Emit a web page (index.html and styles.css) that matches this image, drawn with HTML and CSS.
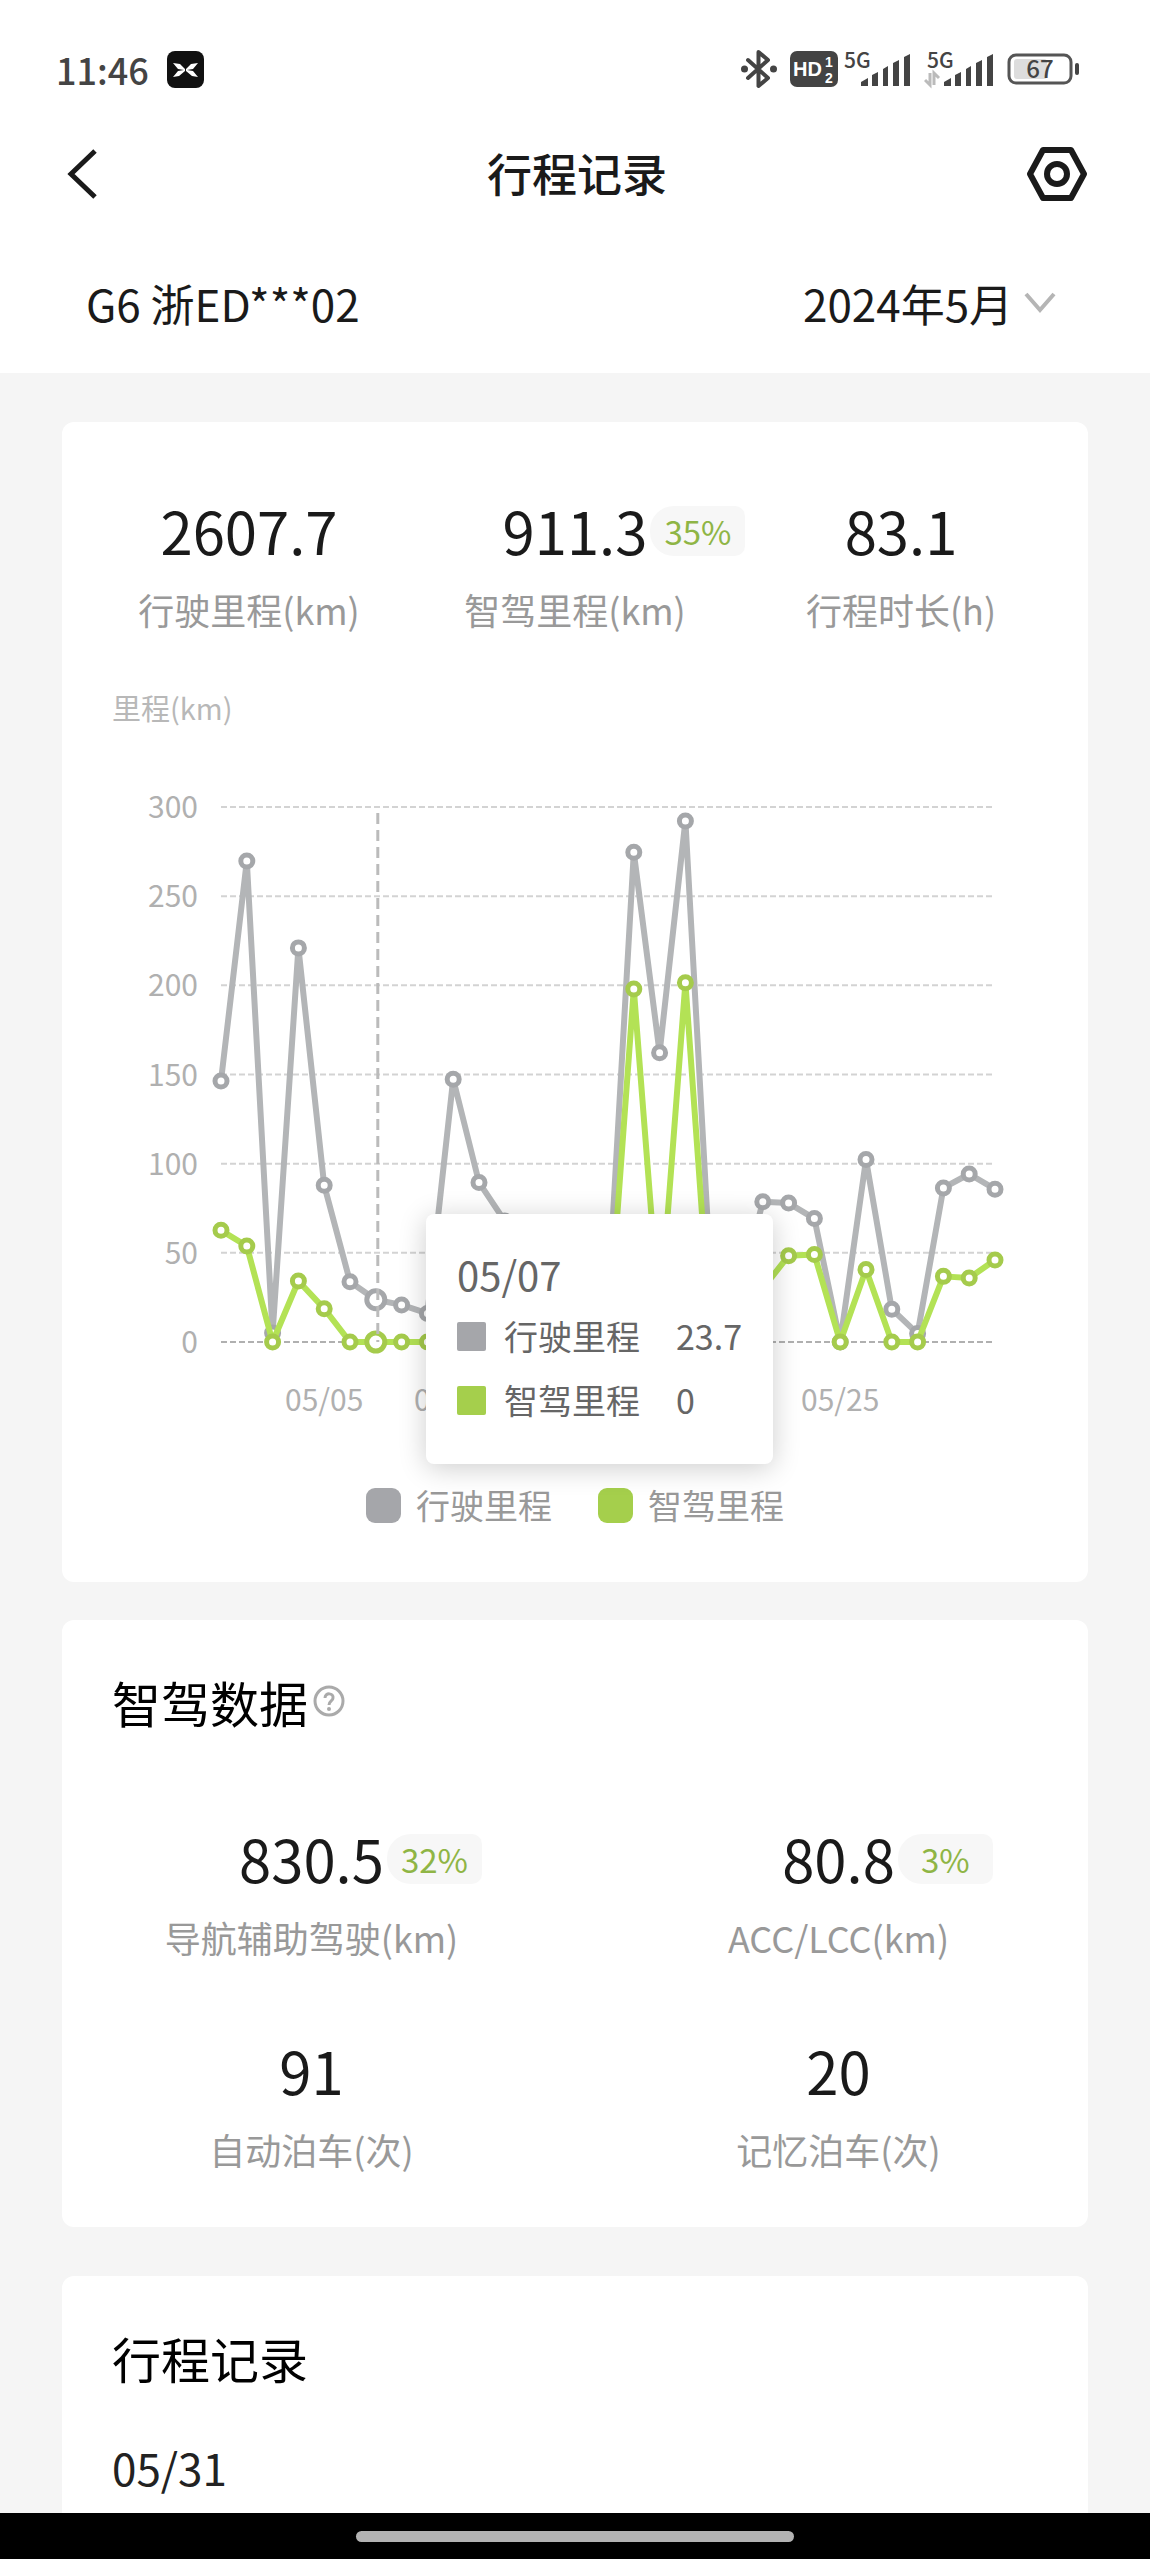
FILE: index.html
```html
<!DOCTYPE html>
<html lang="zh-CN">
<head>
    <meta charset="UTF-8">
    <meta name="viewport" content="width=device-width, initial-scale=1.0">
    <title>行程记录</title>
    <link rel="stylesheet" href="styles.css">
</head>
<body>
    <header class="header">
        <div class="status-bar">
            <span class="time">11:46</span>
            <svg class="app-icon" width="37" height="37" viewBox="0 0 37 37">
                <rect width="37" height="37" rx="8" fill="#111"/>
                <path d="M6 12 L13 13 L18 18 V20 L12 25 L6 26 L11 20 L17 19 L11 18 Z M31 12 L24 13 L19 18 V20 L25 25 L31 26 L26 20 L20 19 L26 18 Z" fill="#fff"/>
            </svg>
            <div class="status-icons">
                <svg width="36" height="40" viewBox="0 0 36 40">
                    <path d="M7 11 L27 29 L17.500 37 V3 L27 11 L7 29" fill="none" stroke="#444" stroke-width="4" stroke-linejoin="round" stroke-linecap="round"/>
                    <circle cx="3.500" cy="20" r="3.500" fill="#444"/>
                    <circle cx="32.500" cy="20" r="3.500" fill="#444"/>
                </svg>
                <svg class="hd" width="48" height="36" viewBox="0 0 48 36">
                    <rect width="48" height="36" rx="7" fill="#444"/>
                    <text class="hd-text" x="3" y="25">HD</text>
                    <text class="hd-num" x="35" y="16">1</text>
                    <text class="hd-num" x="35" y="32">2</text>
                </svg>
                <svg width="67" height="52" viewBox="0 -8 67 52">
                    <text class="net" x="0" y="17">5G</text>
                    <path d="M17 35 v-4 l7 -4 v8z M28 35 v-11 l6 -3 v14z M39 35 v-17 l5 -3 v20z M49 35 v-23 l6 -3 v26z M60 35 v-29 l6 -3 v32z" fill="#444"/>
                </svg>
                <svg width="70" height="52" viewBox="0 -8 70 52">
                    <text class="net" x="3" y="17">5G</text>
                    <path d="M6 22 v12 l-5 -5 M10 34 v-12 l5 5" fill="none" stroke="#bbb" stroke-width="3"/>
                    <path d="M20 35 v-4 l7 -4 v8z M31 35 v-11 l6 -3 v14z M42 35 v-17 l5 -3 v20z M52 35 v-23 l6 -3 v26z M63 35 v-29 l6 -3 v32z" fill="#444"/>
                </svg>
                <svg width="73" height="48" viewBox="0 -8 73 48">
                    <rect x="2" y="2" width="62" height="28" rx="7" fill="#fff" stroke="#555" stroke-width="3"/>
                    <rect x="7" y="6" width="33" height="20" rx="3" fill="#ddd"/>
                    <rect x="68" y="10" width="4" height="12" rx="2" fill="#444"/>
                    <text class="battery" x="33" y="25">67</text>
                </svg>
            </div>
        </div>

        <div class="title-bar">
            <button class="icon-btn" type="button" aria-label="返回">
                <svg width="30" height="50" viewBox="0 0 30 50">
                    <path d="M28 2 L4 25 L28 48" fill="none" stroke="#1a1a1a" stroke-width="5"/>
                </svg>
            </button>
            <h1>行程记录</h1>
            <button class="icon-btn" type="button" aria-label="设置">
                <svg width="60" height="54" viewBox="0 0 60 54">
                    <path d="M16 3 H44 L57 27 L44 51 H16 L3 27 Z" fill="none" stroke="#1a1a1a" stroke-width="6" stroke-linejoin="round"/>
                    <circle cx="30" cy="27" r="10" fill="none" stroke="#1a1a1a" stroke-width="6"/>
                </svg>
            </button>
        </div>

        <div class="filter-bar">
            <span>G6 浙ED***02</span>
            <label class="month">
                <select aria-label="月份">
                    <option>2024年5月</option>
                    <option>2024年4月</option>
                </select>
                <svg width="32" height="22" viewBox="0 0 32 22">
                    <path d="M2 2 L16 18 L30 2" fill="none" stroke="#b5b5b5" stroke-width="4"/>
                </svg>
            </label>
        </div>
    </header>

    <main class="content">
        <section class="card summary">
            <div class="stats three">
                <div class="stat">
                    <div class="value">2607.7</div>
                    <div class="label">行驶里程(km)</div>
                </div>
                <div class="stat">
                    <div class="value">911.3<span class="badge">35%</span></div>
                    <div class="label">智驾里程(km)</div>
                </div>
                <div class="stat">
                    <div class="value">83.1</div>
                    <div class="label">行程时长(h)</div>
                </div>
            </div>
            <div class="unit">里程(km)</div>
            <div class="chart">
                <svg id="chart" viewBox="0 0 1026 650"></svg>
                <div class="tooltip">
                    <div class="tooltip-date">05/07</div>
                    <div class="tooltip-row"><i class="mark gray"></i><span class="name">行驶里程</span><span>23.7</span></div>
                    <div class="tooltip-row"><i class="mark green"></i><span class="name">智驾里程</span><span>0</span></div>
                </div>
            </div>
            <div class="legend">
                <div class="legend-item"><i class="swatch gray"></i>行驶里程</div>
                <div class="legend-item"><i class="swatch green"></i>智驾里程</div>
            </div>
        </section>

        <section class="card driving">
            <h2>智驾数据
                <button class="icon-btn" type="button" aria-label="说明">
                    <svg width="32" height="32" viewBox="0 0 32 32">
                        <circle cx="16" cy="16" r="14" fill="none" stroke="#aaa" stroke-width="3"/>
                        <path d="M12 13 C12 7 21 8 20 13 C20 16 16 16 16 20" fill="none" stroke="#aaa" stroke-width="3"/>
                        <circle cx="16" cy="24" r="2" fill="#aaa"/>
                    </svg>
                </button>
            </h2>
            <div class="stats two">
                <div class="stat">
                    <div class="value">830.5<span class="badge">32%</span></div>
                    <div class="label">导航辅助驾驶(km)</div>
                </div>
                <div class="stat">
                    <div class="value">80.8<span class="badge">3%</span></div>
                    <div class="label">ACC/LCC(km)</div>
                </div>
                <div class="stat">
                    <div class="value">91</div>
                    <div class="label">自动泊车(次)</div>
                </div>
                <div class="stat">
                    <div class="value">20</div>
                    <div class="label">记忆泊车(次)</div>
                </div>
            </div>
        </section>

        <section class="card records">
            <h2>行程记录</h2>
            <div class="date">05/31</div>
        </section>
    </main>

    <footer class="nav-bar"><div class="nav-pill"></div></footer>

    <script src="chart.js"></script>
</body>
</html>
```
FILE: styles.css
```css
* {
    margin: 0;
    padding: 0;
    box-sizing: border-box;
}
body {
    display: flex;
    flex-direction: column;
    min-height: 100vh;
    background-color: #f5f5f5;
    color: #1a1a1a;
    font-family: "Noto Sans CJK SC", "Noto Sans", sans-serif;
}
svg {
    display: block;
}
.icon-btn {
    border: none;
    background: none;
    cursor: pointer;
}

/* header */
.header {
    background: white;
    padding: 44px 0 40px;
}
.status-bar {
    display: flex;
    align-items: center;
    height: 50px;
    padding: 0 70px 0 56px;
}
.time {
    font-size: 36px;
    font-weight: 500;
    line-height: 50px;
    color: #444;
}
.app-icon {
    margin-left: 18px;
}
.status-icons {
    display: flex;
    align-items: center;
    gap: 13px;
    margin-left: auto;
}
.hd {
    margin-right: -7px;
}
.hd-text {
    font-family: "Liberation Sans", sans-serif;
    font-size: 20px;
    font-weight: bold;
    fill: white;
}
.hd-num {
    font-family: "Liberation Sans", sans-serif;
    font-size: 14px;
    font-weight: bold;
    fill: white;
}
.net {
    font-size: 21px;
    font-weight: 500;
    fill: #444;
}
.battery {
    font-size: 24px;
    font-weight: 500;
    fill: #444;
    text-anchor: middle;
}
.title-bar {
    display: flex;
    align-items: center;
    justify-content: space-between;
    height: 100px;
    margin-top: 30px;
    padding: 0 63px 0 67px;
}
.title-bar .icon-btn {
    width: 60px;
}
h1 {
    font-size: 45px;
    font-weight: 500;
    line-height: 60px;
    padding-bottom: 3px;
}
.filter-bar {
    display: flex;
    justify-content: space-between;
    height: 60px;
    margin-top: 49px;
    padding: 0 94px 0 86px;
    font-size: 44px;
    line-height: 60px;
}
.month {
    display: flex;
    align-items: center;
    gap: 10px;
}
.month select {
    appearance: none;
    border: none;
    background: none;
    color: inherit;
    font: inherit;
}

/* cards */
.content {
    flex: 1;
    display: flex;
    flex-direction: column;
    padding: 49px 62px 0;
}
.card {
    background: white;
    border-radius: 12px;
}
.summary {
    padding: 78px 0 57px;
    margin-bottom: 38px;
}
.driving {
    padding: 51px 0 53px;
    margin-bottom: 49px;
}
.records {
    flex: 1;
    padding: 51px 50px 16px;
    border-radius: 12px 12px 0 0;
}
h2 {
    display: flex;
    align-items: center;
    gap: 5px;
    height: 60px;
    font-size: 49px;
    font-weight: 400;
    color: black;
}
.driving h2 {
    padding: 0 50px;
}
.stats {
    display: grid;
    padding: 0 24px;
}
.three {
    grid-template-columns: repeat(3, 1fr);
}
.two {
    grid-template-columns: repeat(2, 1fr);
    gap: 78px 76px;
    margin-top: 97px;
}
.stat {
    display: flex;
    flex-direction: column;
    align-items: center;
    gap: 24px;
}
.value {
    position: relative;
    font-size: 58px;
    line-height: 60px;
}
.badge {
    position: absolute;
    top: 6px;
    left: 100%;
    width: 95px;
    margin-left: 3px;
    border-radius: 24px 10px 10px 24px;
    background: #f7f7f7;
    color: #8fb545;
    font-size: 33px;
    line-height: 50px;
    text-align: center;
}
.label {
    font-size: 36px;
    line-height: 50px;
    color: #999;
}
.unit {
    margin-top: 53px;
    padding: 0 50px;
    font-size: 29px;
    line-height: 40px;
    color: #b8b8b8;
}

/* chart */
.chart {
    position: relative;
    margin-top: 51px;
}
.axis-text {
    font-size: 30px;
    fill: #b0b0b0;
}
.grid-line {
    stroke: #d3d3d3;
    stroke-width: 2;
    stroke-dasharray: 6 3;
}
.base-line {
    stroke: #b0b0b0;
}
.pointer-line {
    stroke: #bbb;
    stroke-width: 3;
    stroke-dasharray: 11 6;
}
.line {
    fill: none;
    stroke-width: 6;
    stroke-linejoin: bevel;
}
.dot {
    fill: white;
    stroke-width: 5;
}
.tooltip {
    position: absolute;
    top: 436px;
    left: 364px;
    padding: 30px 31px 32px;
    border-radius: 8px;
    background: white;
    box-shadow: 0 4px 28px rgba(0, 0, 0, 0.2);
    color: #666;
    white-space: nowrap;
}
.tooltip-date {
    font-size: 40px;
    line-height: 60px;
}
.tooltip-row {
    display: flex;
    align-items: center;
    font-size: 34px;
    line-height: 64px;
}
.tooltip-row .name {
    margin: 0 36px 0 18px;
}
.mark {
    width: 29px;
    height: 29px;
    border-radius: 2px;
}
.gray {
    background: #a5a6aa;
}
.green {
    background: #a5cf4c;
}
.legend {
    display: flex;
    justify-content: center;
    gap: 46px;
    margin-top: 57px;
    font-size: 34px;
    line-height: 40px;
    color: #999;
}
.legend-item {
    display: flex;
    align-items: center;
    gap: 15px;
}
.swatch {
    width: 35px;
    height: 35px;
    border-radius: 9px;
}
.date {
    margin-top: 55px;
    font-size: 44px;
    line-height: 50px;
    color: #222;
}

/* system navigation */
.nav-bar {
    display: flex;
    justify-content: center;
    padding: 18px 0 17px;
    background: black;
}
.nav-pill {
    width: 438px;
    height: 11px;
    border-radius: 6px;
    background: #b3b3b3;
}
```
FILE: chart.js
```js
const total = [146.4, 269.7, 5, 221, 87.9, 33.8, 23.7, 20.8, 16, 147.4, 89.5, 67.8, 40, 22, 18, 22, 274.6, 162.2, 292.2, 31, 22, 78.7, 77.9, 69.2, 0, 102.3, 18.4, 4.7, 86.4, 94.2, 85.7];
const assisted = [62.6, 53.8, 0, 34.2, 18.7, 0, 0, 0, 0, 0, 0, 0, 0, 0, 0, 0, 197.9, 12, 201.4, 0, 0, 30, 48.4, 49.1, 0, 40.6, 0, 0, 36.8, 35.9, 46];

const left = 159;
const right = 933;
const top300 = 29;
const bottom = 564;
const selected = 6;

const x = i => left + i * (right - left) / 30;
const y = v => bottom - v * (bottom - top300) / 300;

let svg = "";

for (let v = 0; v <= 300; v += 50) {
    svg += `<line class="grid-line ${v === 0 ? "base-line" : ""}" x1="${left}" x2="${right}" y1="${y(v)}" y2="${y(v)}"/>`;
    svg += `<text class="axis-text" x="136" y="${y(v) + 11}" text-anchor="end">${v}</text>`;
}

for (let day = 5; day <= 25; day += 5) {
    // day 15 and 20 sit under the open tooltip
    if (day === 15 || day === 20) continue;
    svg += `<text class="axis-text" x="${x(day - 1)}" y="633" text-anchor="middle">05/${String(day).padStart(2, "0")}</text>`;
}

function drawSeries(data, lineColor, dotColor) {
    svg += `<polyline class="line" stroke="${lineColor}" points="${data.map((v, i) => x(i) + "," + y(v)).join(" ")}"/>`;
    data.forEach((v, i) => {
        svg += `<circle class="dot" stroke="${dotColor}" cx="${x(i)}" cy="${y(v)}" r="${i === selected ? 9 : 6}"/>`;
    });
}

drawSeries(total, "#b3b5b7", "#a5a7aa");
drawSeries(assisted, "#b3e255", "#a5cb4c");

svg += `<line class="pointer-line" x1="${x(selected) + 2}" x2="${x(selected) + 2}" y1="35" y2="${bottom}"/>`;

document.getElementById("chart").innerHTML = svg;
```
